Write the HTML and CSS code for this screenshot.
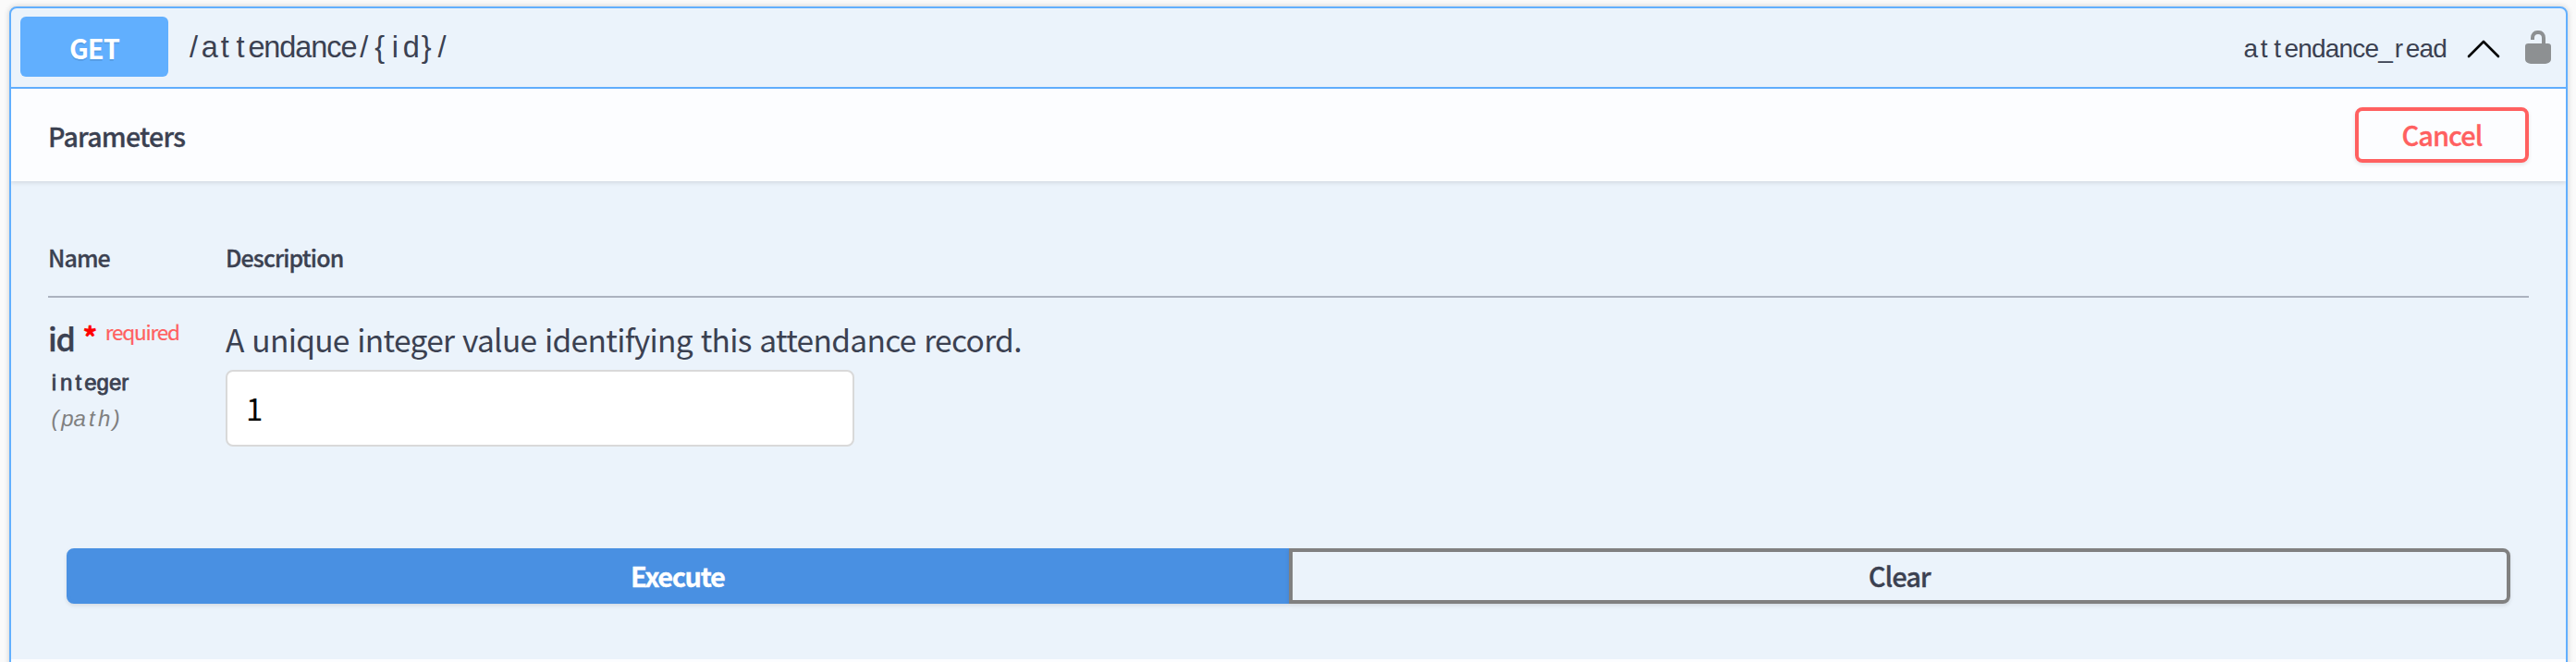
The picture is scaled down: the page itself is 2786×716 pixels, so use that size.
FILE: index.html
```html
<!DOCTYPE html>
<html lang="en">
<head>
<meta charset="utf-8">
<title>Attendance API</title>
<link rel="stylesheet" href="styles.css">
</head>
<body>
<section class="opblock">
  <header class="summary">
    <span class="method">GET</span>
    <span class="path mono"><i>/</i>a<i>t</i><i>t</i>endance<i>/</i><i>{</i><i>i</i>d<i>}</i><i>/</i></span>
    <span class="operation mono">a<i>t</i><i>t</i>endance_<i>r</i>ead</span>
    <svg class="arrow" width="36" height="20" viewBox="0 0 36 20"><path d="M2 18 18 2 34 18" fill="none" stroke="#000" stroke-width="2.6" stroke-linecap="round" stroke-linejoin="round"/></svg>
    <svg class="lock" width="28" height="36" viewBox="0 0 28 36"><path d="M6 10V8A7 8 0 0 1 13 0h2a7 8 0 0 1 7 8v6h2.500a3.500 3 0 0 1 3.500 3v14q0 3-4 4.500l-2 .5H6l-2-.5Q0 34 0 31V17a3.500 3 0 0 1 3.500-3H18V8a4 4 0 0 0-8 0v2z" fill="#8d9092"/></svg>
  </header>
  <div class="section-header">
    <h4 class="title">Parameters</h4>
    <button class="btn cancel">Cancel</button>
  </div>
  <div class="parameters">
    <div class="row head"><span>Name</span><span>Description</span></div>
    <div class="row">
      <div class="name-col">
        <div class="name">id<span class="star">*</span><span class="required">required</span></div>
        <div class="type mono"><i>i</i>n<i>t</i>eger</div>
        <div class="in mono"><i>(</i>pa<i>t</i>h<i>)</i></div>
      </div>
      <div class="desc-col">
        <p class="desc">A unique integer value identifying this attendance record.</p>
        <input class="field" type="text" value="1">
      </div>
    </div>
  </div>
  <div class="actions">
    <button class="btn execute">Execute</button>
    <button class="btn clear">Clear</button>
  </div>
  <div class="responses"></div>
</section>
</body>
</html>
```
FILE: styles.css
```css
* { box-sizing: border-box; }
html, body { height: 716px; overflow: hidden; }
body {
  margin: 0;
  padding: 7px 9px 0 10px;
  background: #fafafa;
  color: #3b4151;
  font-family: "Noto Sans CJK KR", "Noto Sans", sans-serif;
}
.opblock {
  height: 740px;
  border: 2px solid #61affe;
  border-radius: 8px;
  background: #ebf3fb;
  box-shadow: 0 0 6px rgba(0, 0, 0, .19);
  overflow: hidden;
}
.summary {
  display: flex;
  align-items: center;
  height: 87px;
  padding: 0 16px 2px 10px;
  border-bottom: 2px solid #61affe;
}
.method {
  width: 160px;
  height: 65px;
  border-radius: 6px;
  background: #61affe;
  color: #fff;
  font-size: 29px;
  font-weight: 700;
  letter-spacing: -.9px;
  line-height: 67px;
  text-align: center;
  text-shadow: 0 2px 0 rgba(0, 0, 0, .1);
}
.mono { font-family: "Liberation Sans", Arial, sans-serif; white-space: nowrap; }
.mono i {
  display: inline-block;
  width: var(--pitch);
  font-style: inherit;
  letter-spacing: 0;
  text-align: center;
}
.path { --pitch: 16.8px; flex: 1; margin: 1px 0 0 19px; font-size: 32.5px; letter-spacing: -1.1px; line-height: 40px; }
.operation { --pitch: 14.6px; margin-top: 5px; font-size: 28px; letter-spacing: -.8px; line-height: 40px; }
.arrow { margin: 5px 0 0 22px; }
.lock { margin: 0 0 0 27px; }
.section-header {
  display: flex;
  align-items: center;
  justify-content: space-between;
  height: 100px;
  padding: 0 40px;
  background: #fcfdff;
  box-shadow: 0 2px 4px rgba(0, 0, 0, .1);
}
.title { margin: 1px 0 0; font-size: 28.5px; font-weight: 500; letter-spacing: -.75px; line-height: 40px; -webkit-text-stroke: .3px; }
.btn {
  height: 60px;
  padding: 0 0 2px;
  border: 4px solid gray;
  border-radius: 8px;
  background: transparent;
  box-shadow: 0 2px 4px rgba(0, 0, 0, .1);
  color: #3b4151;
  font-family: inherit;
  font-size: 29px;
  font-weight: 500;
  letter-spacing: -1px;
  line-height: 50px;
  -webkit-text-stroke: .3px;
}
.cancel { width: 188px; border-color: #ff6060; color: #ff6060; }
.parameters { height: 397px; padding: 60px 40px 0; }
.row { display: grid; grid-template-columns: 192px 1fr; }
.head {
  height: 66px;
  border-bottom: 2px solid #abb2bf;
  font-size: 25px;
  font-weight: 500;
  letter-spacing: -.9px;
  line-height: 44px;
  -webkit-text-stroke: .3px;
}
.name { display: flex; height: 70px; padding-top: 18px; font-size: 34px; font-weight: 500; letter-spacing: -1.4px; line-height: 51px; -webkit-text-stroke: .4px; }
.star { margin-left: 9px; color: #f00; font-size: 31px; font-weight: 700; line-height: 48px; }
.required { margin-left: 10px; color: #ff6060; font-size: 22.500px; font-weight: 400; letter-spacing: -1.2px; line-height: 37px; -webkit-text-stroke: .2px; }
.type { --pitch: 13px; font-size: 24px; letter-spacing: -.05px; line-height: 44px; -webkit-text-stroke: .8px; }
.in { --pitch: 13.2px; margin-left: 1px; color: gray; font-size: 24px; font-style: italic; letter-spacing: -.1px; line-height: 34px; }
.desc { height: 52px; margin: 20px 0 6px; font-size: 33.5px; letter-spacing: -.7px; word-spacing: 1.800px; line-height: 50px; }
.field {
  display: block;
  width: 680px;
  height: 83px;
  padding: 0 20px 2px;
  border: 2px solid #d9d9d9;
  border-radius: 8px;
  background: #fff;
  color: #000;
  font: 33px "Noto Sans CJK KR", sans-serif;
}
.actions { display: flex; padding: 0 60px; }
.actions .btn { flex: 1; }
.actions .execute { border-color: #4990e2; border-radius: 8px 0 0 8px; background: #4990e2; color: #fff; font-weight: 700; letter-spacing: -1.4px; }
.actions .clear { border-radius: 0 8px 8px 0; }
.responses { height: 30px; margin-top: 60px; background: #fcfdff; }
```
